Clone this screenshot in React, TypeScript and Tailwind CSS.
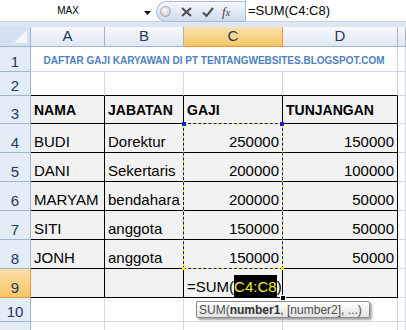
import clsx from 'clsx'

const COLS = ['col-start-1', 'col-start-2', 'col-start-3', 'col-start-4', 'col-start-5', 'col-start-6']
const ROWS = [
  'row-start-1',
  'row-start-2',
  'row-start-3',
  'row-start-4',
  'row-start-5',
  'row-start-6',
  'row-start-7',
  'row-start-8',
  'row-start-9',
  'row-start-10',
  'row-start-11',
  'row-start-12',
]

const DATA = [
  ['BUDI', 'Dorektur', '250000', '150000'],
  ['DANI', 'Sekertaris', '200000', '100000'],
  ['MARYAM', 'bendahara', '200000', '50000'],
  ['SITI', 'anggota', '150000', '50000'],
  ['JONH', 'anggota', '150000', '50000'],
]

const HEADS = ['NAMA', 'JABATAN', 'GAJI', 'TUNJANGAN']

function Cell({
  c,
  r,
  className,
  children,
}: {
  c: number
  r: number
  className?: string
  children?: React.ReactNode
}) {
  return (
    <div
      className={clsx(
        COLS[c - 1],
        ROWS[r - 1],
        'flex min-w-0 overflow-hidden whitespace-nowrap border-r border-b',
        className,
      )}
    >
      {children}
    </div>
  )
}

function FormulaBar() {
  return (
    <>
      <div className="flex h-[22px] border-b border-[#c3d2e6] bg-white">
        <div className="relative flex w-[156px] items-center">
          <span className="w-[136px] text-center text-[10px] text-black">MAX</span>
          <svg className="absolute left-[144px] top-[11px]" width="7" height="4" viewBox="0 0 7 4">
            <path d="M0 0h7L3.5 4z" fill="#111" />
          </svg>
        </div>
        <div className="mt-[1px] flex h-[21px] w-[89px] items-center rounded-l-[11px] border border-r-0 border-[#a9bcd6] bg-gradient-to-b from-[#f5f8fc] to-[#cedbed]">
          <span className="ml-[3px] h-[11px] w-[11px] rounded-full border border-[#a7abb2] bg-[radial-gradient(circle_at_40%_35%,#ffffff,#b9bcc2)]" />
          <svg className="ml-[10px]" width="11" height="10" viewBox="0 0 11 10">
            <path d="M1 1l9 8M10 1l-9 8" stroke="#4b4b4b" strokeWidth="2" />
          </svg>
          <svg className="ml-[10px]" width="12" height="10" viewBox="0 0 12 10">
            <path d="M1 5.5l3.5 3.5L11 1" stroke="#4b4b4b" strokeWidth="2" fill="none" />
          </svg>
          <span className="ml-[8px] font-['Liberation_Serif',serif] text-[13px] italic leading-none text-[#444]">
            f<span className="text-[10px]">x</span>
          </span>
        </div>
        <div className="flex flex-1 items-center border-l border-[#a9bcd6] pl-[2px] text-[13px] text-black">
          =SUM(C4:C8)
        </div>
      </div>
      <div className="h-[5px] bg-[#dde7f4]" />
    </>
  )
}

export default function App() {
  const grid = 'border-[#d0d7e5] bg-white'
  const table = 'border-black bg-[#f2f2f2]'
  const colHead =
    'items-center justify-center border-[#9eb6ce] bg-gradient-to-b from-[#f7f9fc] to-[#e1e8f2] text-[15px] text-[#1f3a5c]'
  const rowHead =
    'items-end justify-center border-[#9eb6ce] bg-[#e4ecf7] pb-0 text-[15px] leading-[18px] text-[#1f3a5c]'

  return (
    <div className="h-[330px] w-[406px] overflow-hidden bg-white font-['Liberation_Sans',Arial,sans-serif]">
      <FormulaBar />
      <div className="relative grid h-[303px] grid-cols-[31px_74px_79px_99px_115px_1fr] grid-rows-[20px_25px_24px_28px_29px_29px_29px_29px_29px_29px_24px_24px] overflow-hidden">
        {/* corner */}
        <Cell c={1} r={1} className="relative border-[#9eb6ce] bg-[#d5e1f1]">
          <svg className="absolute bottom-[3px] right-[3px]" width="13" height="13" viewBox="0 0 13 13">
            <path d="M13 0v13H0z" fill="#f4f7fb" />
          </svg>
        </Cell>
        {/* column headers */}
        {['A', 'B', 'C', 'D', ''].map((l, i) =>
          l === 'C' ? (
            <Cell
              key={l}
              c={i + 2}
              r={1}
              className="items-center justify-center border-[#f29536] bg-gradient-to-b from-[#fbe2ae] to-[#f5c665] text-[15px] text-[#1f3a5c]"
            >
              {l}
            </Cell>
          ) : (
            <Cell key={i} c={i + 2} r={1} className={colHead}>
              {l}
            </Cell>
          ),
        )}
        {/* row headers */}
        {Array.from({ length: 11 }, (_, i) => (
          <Cell
            key={i}
            c={1}
            r={i + 2}
            className={clsx(
              rowHead,
              i === 8 && 'border-[#f29536] bg-gradient-to-b from-[#fbdfa6] to-[#f5c665]',
            )}
          >
            {i + 1}
          </Cell>
        ))}
        {/* row 1: merged title */}
        <div
          className={clsx(
            'col-start-2 col-span-4 row-start-2 flex items-center justify-center border-r border-b pt-[2px] text-[10px] font-bold text-[#4f81bd]',
            grid,
          )}
        >
          DAFTAR GAJI KARYAWAN DI PT TENTANGWEBSITES.BLOGSPOT.COM
        </div>
        <Cell c={6} r={2} className={grid} />
        {/* row 2 */}
        {[2, 3, 4, 5].map((c) => (
          <Cell key={c} c={c} r={3} className="border-r-[#d0d7e5] border-b-black bg-white" />
        ))}
        <Cell c={6} r={3} className={grid} />
        {/* row 3 headings */}
        {HEADS.map((h, i) => (
          <Cell
            key={h}
            c={i + 2}
            r={4}
            className={clsx(table, 'items-center pl-[3px] pt-[2px] text-[14px] font-bold text-black')}
          >
            {h}
          </Cell>
        ))}
        <Cell c={6} r={4} className={grid} />
        {/* data rows */}
        {DATA.map((row, ri) => (
          <>
            {row.map((v, ci) => (
              <Cell
                key={`${ri}-${ci}`}
                c={ci + 2}
                r={ri + 5}
                className={clsx(
                  table,
                  'items-end pb-px text-[15px] leading-[18px] text-black',
                  ci < 2 ? 'pl-[3px]' : 'justify-end pr-[3px]',
                )}
              >
                {v}
              </Cell>
            ))}
            <Cell key={`e${ri}`} c={6} r={ri + 5} className={grid} />
          </>
        ))}
        {/* row 9 */}
        <Cell c={2} r={10} className={table} />
        <Cell c={3} r={10} className={table} />
        <div
          className={clsx(
            'relative col-start-4 row-start-10 flex items-end whitespace-nowrap border-r border-b pl-[3px] text-[15px] leading-[18px] text-black',
            table,
          )}
        >
          <span className="pb-px">=SUM(</span>
          <span className="flex h-[22px] items-end bg-black pb-px text-[#f2f21e]">C4:C8</span>
          <span className="pb-px">)</span>
          <span className="absolute -bottom-[4px] -right-[4px] z-10 h-[6px] w-[6px] border border-white bg-black" />
        </div>
        <Cell c={5} r={10} className={table} />
        <Cell c={6} r={10} className={grid} />
        {/* rows 10, 11 */}
        {[11, 12].map((r) =>
          [2, 3, 4, 5, 6].map((c) => <Cell key={`${r}-${c}`} c={c} r={r} className={grid} />),
        )}
        {/* copy marquee around C4:C8 */}
        <div className="pointer-events-none relative col-start-4 row-start-5 row-span-5">
          <div className="absolute -left-px -top-px bottom-0 right-0 border border-[#f5f500]" />
          <div className="absolute -left-px -top-px bottom-0 right-0 border border-dashed border-[#10108a]" />
          <span className="absolute -left-[2px] -top-[2px] h-[4px] w-[4px] bg-[#1c1ccc]" />
          <span className="absolute -right-[1px] -top-[2px] h-[4px] w-[4px] bg-[#1c1ccc]" />
          <span className="absolute -bottom-[1px] -left-[2px] h-[3px] w-[3px] bg-[#f5f500]" />
          <span className="absolute -bottom-[1px] -right-[1px] h-[3px] w-[3px] bg-[#f5f500]" />
        </div>
        {/* function tooltip */}
        <div className="absolute left-[196px] top-[274px] z-20 flex h-[17px] w-[174px] items-center rounded-[2px] border border-[#8a8a8a] bg-gradient-to-b from-white to-[#e3e3e3] pl-[2px] text-[12px] leading-none text-[#4c4c4c] shadow-[2px_2px_2px_rgba(0,0,0,0.35)]">
          SUM(<b className="text-[#333]">number1</b>, [number2], ...)
        </div>
      </div>
    </div>
  )
}
